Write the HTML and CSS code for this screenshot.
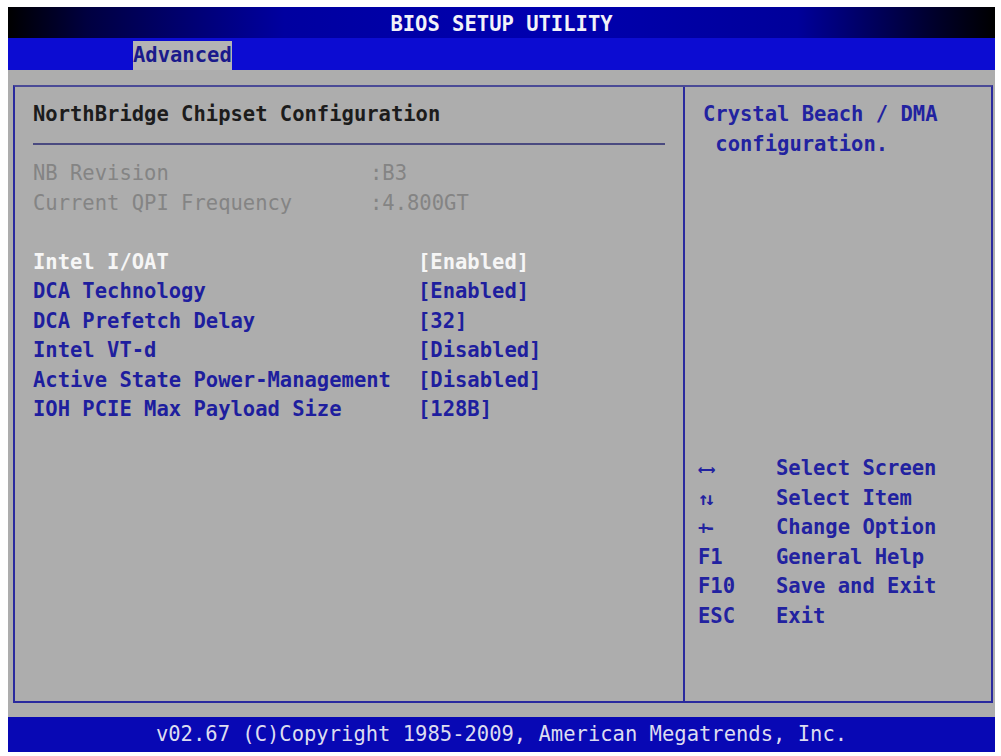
FILE: index.html
```html
<!DOCTYPE html>
<html lang="en">
<head>
    <meta charset="UTF-8">
    <meta name="viewport" content="width=device-width, initial-scale=1.0">
    <title>BIOS Setup Utility</title>
    <link rel="stylesheet" href="styles.css">
</head>
<body>
    <div class="screen">
        <div class="title-bar">BIOS SETUP UTILITY</div>
        <div class="tab-bar">
            <div class="tab">Advanced</div>
        </div>

        <div class="main">
            <div class="box">
                <div class="settings">
                    <h1 class="heading">NorthBridge Chipset Configuration</h1>
                    <div class="rule"></div>

                    <div class="row info">
                        <span class="label">NB Revision</span>
                        <span class="value">:B3</span>
                    </div>
                    <div class="row info">
                        <span class="label">Current QPI Frequency</span>
                        <span class="value">:4.800GT</span>
                    </div>

                    <div class="row"></div>

                    <div class="row option selected">
                        <span class="label">Intel I/OAT</span>
                        <span class="value">[Enabled]</span>
                    </div>
                    <div class="row option">
                        <span class="label">DCA Technology</span>
                        <span class="value">[Enabled]</span>
                    </div>
                    <div class="row option">
                        <span class="label">DCA Prefetch Delay</span>
                        <span class="value">[32]</span>
                    </div>
                    <div class="row option">
                        <span class="label">Intel VT-d</span>
                        <span class="value">[Disabled]</span>
                    </div>
                    <div class="row option">
                        <span class="label">Active State Power-Management</span>
                        <span class="value">[Disabled]</span>
                    </div>
                    <div class="row option">
                        <span class="label">IOH PCIE Max Payload Size</span>
                        <span class="value">[128B]</span>
                    </div>
                </div>

                <div class="help">
                    <div class="help-text">
                        <div class="line">Crystal Beach / DMA</div>
                        <div class="line">&nbsp;configuration.</div>
                    </div>

                    <div class="keys">
                        <span class="key small">&larr;&rarr;</span><span>Select Screen</span>
                        <span class="key small">&uarr;&darr;</span><span>Select Item</span>
                        <span class="key small">+-</span><span>Change Option</span>
                        <span class="key">F1</span><span>General Help</span>
                        <span class="key">F10</span><span>Save and Exit</span>
                        <span class="key">ESC</span><span>Exit</span>
                    </div>
                </div>
            </div>
        </div>

        <div class="footer">v02.67 (C)Copyright 1985-2009, American Megatrends, Inc.</div>
    </div>
</body>
</html>
```

FILE: styles.css
```css
body {
    margin: 0;
    padding: 7px 0 0 8px;
    background-color: #ffffff;
    font-family: "DejaVu Sans Mono", "Liberation Mono", monospace;
    font-size: 20.5px;
    font-weight: bold;
}

.screen {
    width: 987px;
}

.title-bar {
    height: 27px;
    padding-top: 4px;
    line-height: 27px;
    text-align: center;
    color: #f2f2f8;
    background: linear-gradient(to right, #000000 0%, #000040 8%, #0000a0 28%, #0000b0 55%, #00009a 80%, #00002a 94%, #000000 100%);
}

.tab-bar {
    display: flex;
    align-items: flex-end;
    height: 32px;
    padding-left: 125px;
    background-color: #0c0cd2;
}

.tab {
    height: 29px;
    line-height: 29px;
    color: #1a1a8c;
    background-color: #b4b4b4;
}

.main {
    padding: 15px 2px 14px 5px;
    background-color: #adadad;
}

.box {
    display: flex;
    height: 618px;
    box-sizing: border-box;
    border: 2px solid #2a2a9e;
    border-top-color: #4a4a96;
}

.row {
    display: flex;
    height: 29.5px;
    line-height: 29.5px;
}

.settings {
    width: 668px;
    box-sizing: border-box;
    padding: 13px 0 0 18px;
}

.heading {
    margin: 0;
    height: 29.5px;
    line-height: 29.5px;
    font-size: 20.5px;
    color: #1c1c1c;
}

.rule {
    height: 29.5px;
    width: 632px;
    background: linear-gradient(#4a4a80, #4a4a80) no-repeat 0 13px / 100% 2px;
}

.info {
    color: #848484;
    font-weight: normal;
}

.info .label {
    width: 337px;
}

.option {
    color: #1e1e9e;
}

.option .label {
    width: 385px;
}

.option.selected {
    color: #f6f6f6;
}

.help {
    display: flex;
    flex-direction: column;
    justify-content: space-between;
    flex: 1;
    border-left: 2px solid #2a2a9e;
    padding: 13px 0 70px 18px;
    color: #2222a0;
}

.help-text .line {
    height: 29.5px;
    line-height: 29.5px;
    white-space: pre;
}

.keys {
    display: grid;
    grid-template-columns: 78px auto;
    grid-auto-rows: 29.5px;
    line-height: 29.5px;
    margin-left: -5px;
}

.key.small {
    font-size: 18px;
    letter-spacing: -4px;
}

.footer {
    height: 35px;
    line-height: 35px;
    text-align: center;
    font-weight: normal;
    color: #dcdcf0;
    background-color: #0808b4;
}
```
